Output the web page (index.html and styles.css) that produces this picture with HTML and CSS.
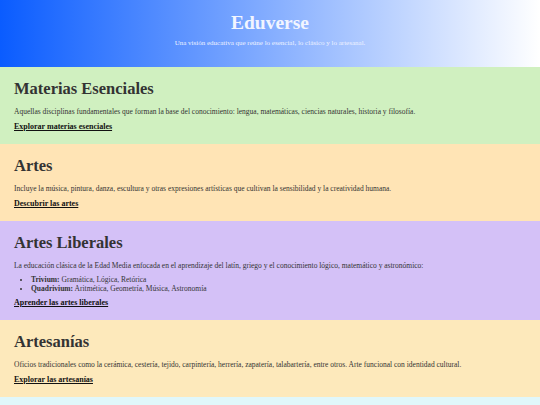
FILE: index.html
```html
<!DOCTYPE html>
<html lang="es">
<head>
<meta charset="utf-8">
<title>Eduverse</title>
<link rel="stylesheet" href="styles.css">
</head>
<body>
<header class="hero">
  <h1 class="hero-title">Eduverse</h1>
  <p class="hero-sub">Una visión educativa que reúne lo esencial, lo clásico y lo artesanal.</p>
</header>
<section class="block block-green">
  <h2 class="block-title">Materias Esenciales</h2>
  <p class="block-text">Aquellas disciplinas fundamentales que forman la base del conocimiento: lengua, matemáticas, ciencias naturales, historia y filosofía.</p>
  <a class="block-link" href="#">Explorar materias esenciales</a>
</section>
<section class="block block-orange">
  <h2 class="block-title">Artes</h2>
  <p class="block-text">Incluye la música, pintura, danza, escultura y otras expresiones artísticas que cultivan la sensibilidad y la creatividad humana.</p>
  <a class="block-link" href="#">Descubrir las artes</a>
</section>
<section class="block block-purple">
  <h2 class="block-title">Artes Liberales</h2>
  <p class="block-text">La educación clásica de la Edad Media enfocada en el aprendizaje del latín, griego y el conocimiento lógico, matemático y astronómico:</p>
  <ul class="block-list">
    <li><strong>Trivium:</strong> Gramática, Lógica, Retórica</li>
    <li><strong>Quadrivium:</strong> Aritmética, Geometría, Música, Astronomía</li>
  </ul>
  <a class="block-link" href="#">Aprender las artes liberales</a>
</section>
<section class="block block-sand">
  <h2 class="block-title">Artesanías</h2>
  <p class="block-text">Oficios tradicionales como la cerámica, cestería, tejido, carpintería, herrería, zapatería, talabartería, entre otros. Arte funcional con identidad cultural.</p>
  <a class="block-link" href="#">Explorar las artesanías</a>
</section>
<section class="block-tail"></section>
</body>
</html>
```
FILE: styles.css
```css
html, body {
  margin: 0;
  padding: 0;
}
body {
  font-family: "Liberation Serif", "Times New Roman", serif;
  color: #333;
  background: #fff;
}
.hero {
  background: linear-gradient(90deg, #0a5cff 0%, #ffffff 100%);
  text-align: center;
  height: 67px;
  padding-top: 12px;
  box-sizing: border-box;
}
.hero-title {
  margin: 0;
  font-size: 19.5px;
  line-height: 22px;
  font-weight: bold;
  color: #f2f5ff;
}
.hero-sub {
  margin: 5px 0 0;
  font-size: 7px;
  line-height: 9px;
  color: #eef2ff;
}
.block {
  padding: 12.5px 14px 13.5px;
}
.block-green { background: #d0f0c0; }
.block-orange { background: #ffe4b5; }
.block-purple { background: #d4c1f7; }
.block-sand { background: #fde9bb; }
.block-tail {
  background: #e0f7fa;
  height: 40px;
}
.block-title {
  margin: 0 0 9px;
  font-size: 16.5px;
  line-height: 18px;
  font-weight: bold;
  color: #333;
}
.block-text {
  margin: 0 0 6px;
  font-size: 7.5px;
  line-height: 9px;
}
.block-list {
  margin: -1px 0 5px;
  padding-left: 17px;
  font-size: 7.5px;
  line-height: 9px;
}
.block-link {
  display: block;
  font-size: 8px;
  line-height: 9px;
  font-weight: bold;
  color: #111;
  text-decoration: underline;
}
```
